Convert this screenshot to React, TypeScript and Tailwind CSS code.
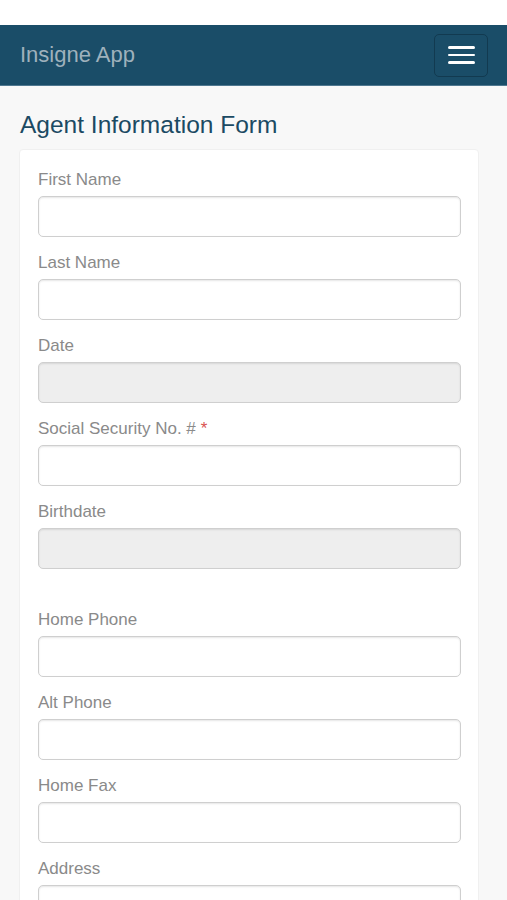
import React from "react";

type Field = { label: string; disabled?: boolean; required?: boolean; spacerAfter?: boolean };

const fields: Field[] = [
  { label: "First Name" },
  { label: "Last Name" },
  { label: "Date", disabled: true },
  { label: "Social Security No. #", required: true },
  { label: "Birthdate", disabled: true, spacerAfter: true },
  { label: "Home Phone" },
  { label: "Alt Phone" },
  { label: "Home Fax" },
  { label: "Address" },
];

export default function App() {
  return (
    <div className="min-h-[900px] bg-[#f8f8f8] font-['Liberation_Sans',Arial,sans-serif]">
      <div className="h-[25px] bg-white" />
      <nav className="flex h-[61px] items-center justify-between border-b border-[#4f7890] bg-[#1a4d68] pl-[20px] pr-[19px]">
        <span className="text-[22px] leading-none text-[#9fb1bc]">Insigne App</span>
        <button className="flex h-[43px] w-[54px] flex-col items-center justify-center gap-[5px] rounded-[5px] border border-[#123a50]">
          <span className="block h-[2.5px] w-[27px] rounded-sm bg-white" />
          <span className="block h-[2.5px] w-[27px] rounded-sm bg-white" />
          <span className="block h-[2.5px] w-[27px] rounded-sm bg-white" />
        </button>
      </nav>
      <div className="pl-[19px] pr-[28px]">
        <h1 className="mt-[26px] pl-[1px] text-[24.5px] leading-[26px] text-[#1b4a63]">Agent Information Form</h1>
        <div className="mt-[11px] rounded-[4px] border border-[#f0f0f0] bg-white pl-[18px] pr-[17px] pt-[20px]">
          {fields.map((f) => (
            <div key={f.label}>
              <label className="mb-[6px] block text-[17px] leading-5 text-[#8a8a8a]">
                {f.label}
                {f.required && <span className="ml-[5px] text-[#d9534f]">*</span>}
              </label>
              <input
                disabled={f.disabled}
                className={
                  "mb-[16px] block h-[41px] w-full rounded-[5px] border border-[#cfcfcf] shadow-[inset_0_1px_2px_rgba(0,0,0,0.1)] " +
                  (f.disabled ? "bg-[#eeeeee]" : "bg-white")
                }
              />
              {f.spacerAfter && <div className="h-[25px]" />}
            </div>
          ))}
        </div>
      </div>
    </div>
  );
}
